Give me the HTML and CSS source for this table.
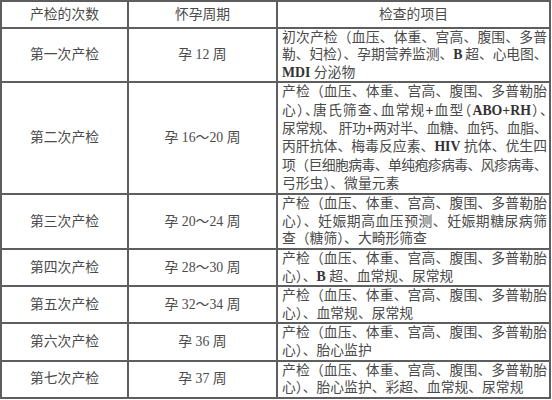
FILE: index.html
```html
<!DOCTYPE html>
<html lang="zh-CN">
<head>
<meta charset="utf-8">
<link rel="stylesheet" href="styles.css">
</head>
<body>
<table class="tbl">
  <colgroup><col class="c1"><col class="c2"><col class="c3"></colgroup>
  <thead>
    <tr><th>产检的次数</th><th>怀孕周期</th><th>检查的项目</th></tr>
  </thead>
  <tbody>
    <tr>
      <td class="n">第一次产检</td>
      <td class="w">孕 12 周</td>
      <td class="items">
        <span class="ln">初次产检（血压、体重、宫高、腹围、多普</span>
        <span class="ln t1">勒、妇检）、孕期营养监测、<b class="lat">B</b> 超、心电图、</span>
        <span class="ln end"><b class="lat">MDI</b> 分泌物</span>
      </td>
    </tr>
    <tr class="tall">
      <td class="n">第二次产检</td>
      <td class="w">孕 16～20 周</td>
      <td class="items">
        <span class="ln">产检（血压、体重、宫高、腹围、多普勒胎</span>
        <span class="ln cmp">心）、唐氏筛查、血常规<b class="lat">+</b>血型（<b class="lat">ABO+RH</b>）、</span>
        <span class="ln t2">尿常规、 肝功<b class="lat">+</b>两对半、血糖、血钙、血脂、</span>
        <span class="ln">丙肝抗体、梅毒反应素、<b class="lat">HIV</b> 抗体、优生四</span>
        <span class="ln t3">项（巨细胞病毒、单纯疱疹病毒、风疹病毒、</span>
        <span class="ln end">弓形虫）、微量元素</span>
      </td>
    </tr>
    <tr>
      <td class="n">第三次产检</td>
      <td class="w">孕 20～24 周</td>
      <td class="items">
        <span class="ln">产检（血压、体重、宫高、腹围、多普勒胎</span>
        <span class="ln">心）、妊娠期高血压预测、妊娠期糖尿病筛</span>
        <span class="ln end">查（糖筛）、大畸形筛查</span>
      </td>
    </tr>
    <tr>
      <td class="n">第四次产检</td>
      <td class="w">孕 28～30 周</td>
      <td class="items">
        <span class="ln">产检（血压、体重、宫高、腹围、多普勒胎</span>
        <span class="ln end">心）、<b class="lat">B</b> 超、血常规、尿常规</span>
      </td>
    </tr>
    <tr>
      <td class="n">第五次产检</td>
      <td class="w">孕 32～34 周</td>
      <td class="items">
        <span class="ln">产检（血压、体重、宫高、腹围、多普勒胎</span>
        <span class="ln end">心）、血常规、尿常规</span>
      </td>
    </tr>
    <tr>
      <td class="n">第六次产检</td>
      <td class="w">孕 36 周</td>
      <td class="items">
        <span class="ln">产检（血压、体重、宫高、腹围、多普勒胎</span>
        <span class="ln end">心）、胎心监护</span>
      </td>
    </tr>
    <tr>
      <td class="n">第七次产检</td>
      <td class="w">孕 37 周</td>
      <td class="items">
        <span class="ln">产检（血压、体重、宫高、腹围、多普勒胎</span>
        <span class="ln end">心）、胎心监护、彩超、血常规、尿常规</span>
      </td>
    </tr>
  </tbody>
</table>
</body>
</html>
```
FILE: styles.css
```css
html, body {
  margin: 0;
  padding: 0;
  background: #ffffff;
}

.tbl {
  border-collapse: collapse;
  table-layout: fixed;
  width: 551px;
  font-family: "Liberation Serif", "Noto Sans CJK SC", serif;
  font-size: 13.8px;
  color: #4a4a4a;
}

.c1 { width: 127px; }
.c2 { width: 149px; }
.c3 { width: 273px; }

.tbl th,
.tbl td {
  border: 2px solid #5e5e5e;
  padding: 0;
  line-height: 17.6px;
  font-weight: 400;
}

.tbl th {
  padding: 4px 0 3px;
  text-align: center;
}

.tall td {
  line-height: 18.3px;
}

.n,
.w {
  text-align: center;
  vertical-align: middle;
}

.items {
  vertical-align: top;
  text-align: left;
}

.tbl td.items {
  padding: 0 2px 0 4px;
}

.ln {
  display: block;
  white-space: nowrap;
  text-align: justify;
  text-align-last: justify;
}

.ln.end {
  text-align: left;
  text-align-last: left;
}

.lat {
  font-weight: 700;
  color: #333333;
}

.t1 { letter-spacing: -0.55px; }
.t2 { letter-spacing: -0.45px; }
.t3 { letter-spacing: -0.6px; }

.cmp {
  font-feature-settings: "halt";
}
```
